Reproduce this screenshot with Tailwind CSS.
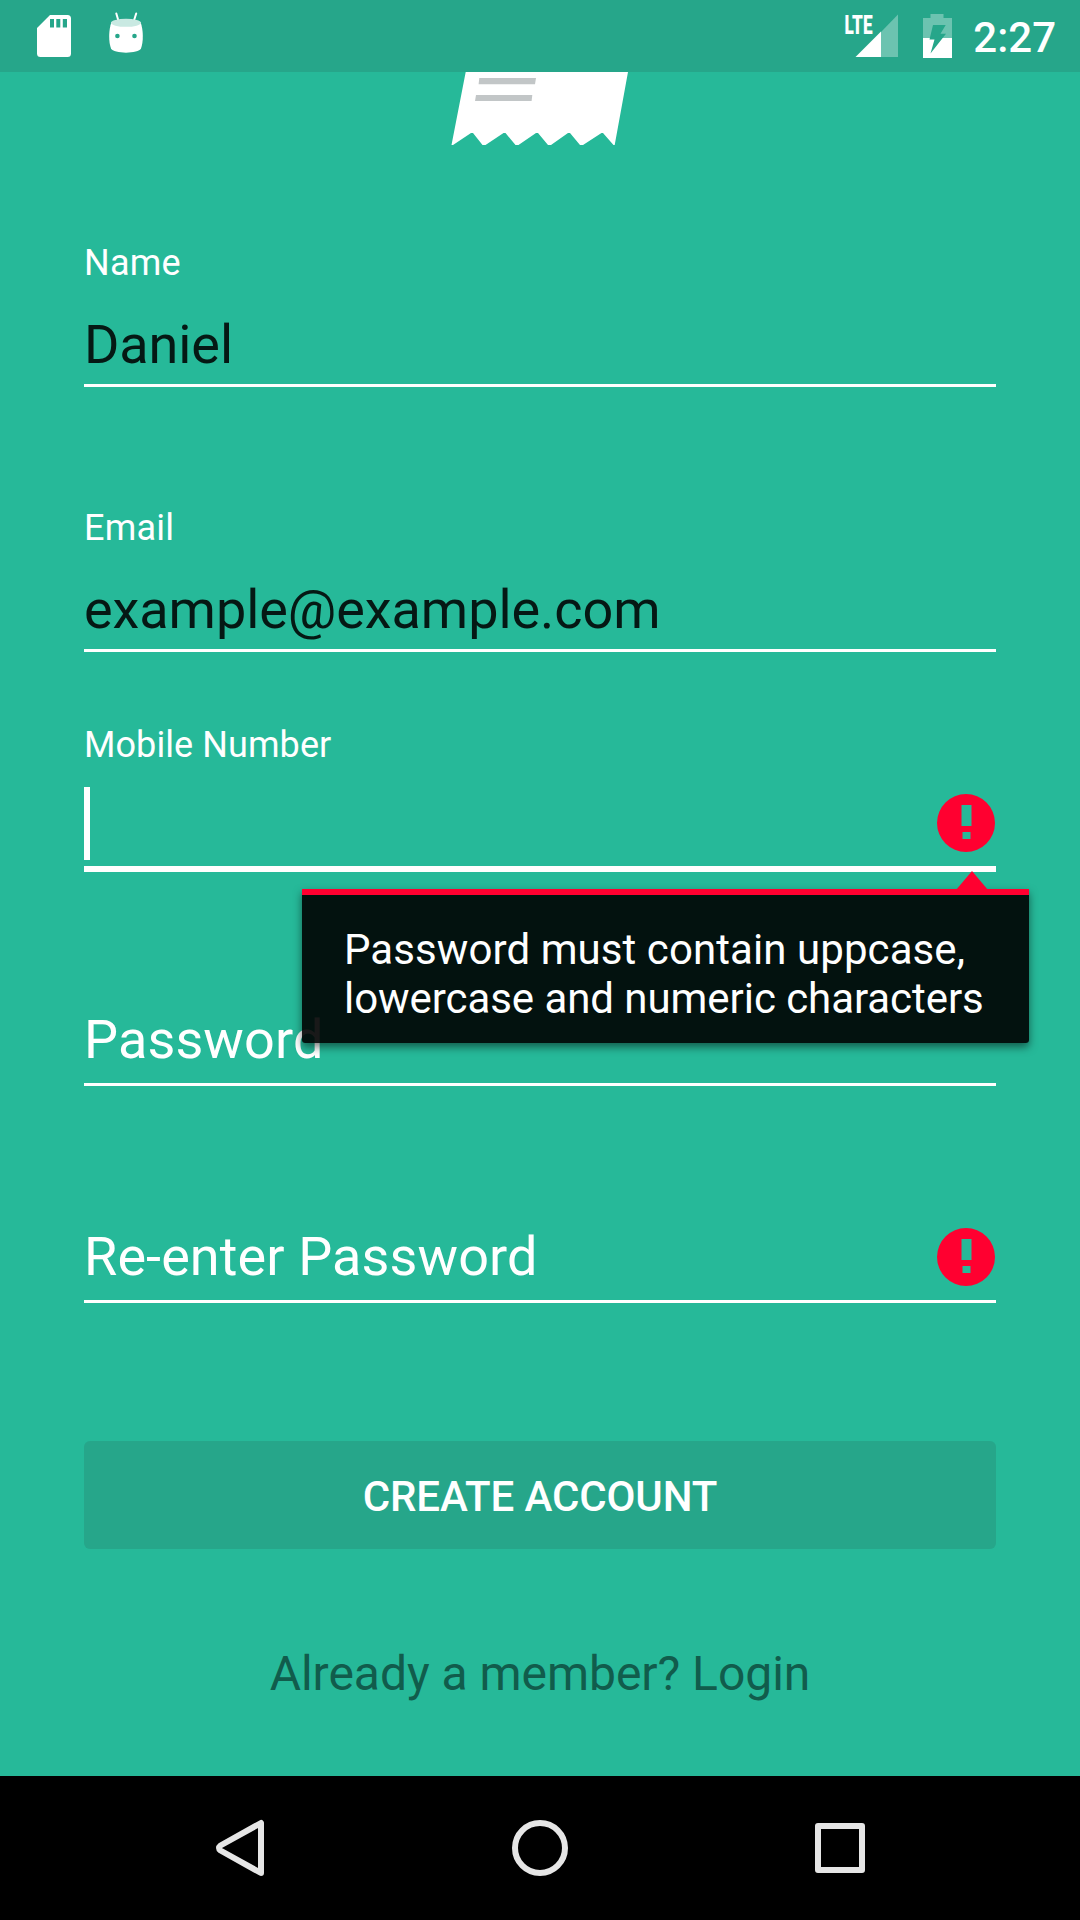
<!DOCTYPE html>
<html lang="en">
<head>
<meta charset="utf-8">
<meta name="viewport" content="width=device-width, initial-scale=1">
<title>Create Account</title>
<script src="https://cdn.jsdelivr.net/npm/@tailwindcss/browser@4"></script>
</head>
<body class="bg-[#26b999]">
<div class="flex h-[1920px] w-[1080px] flex-col overflow-hidden bg-[#26b999] font-[Roboto,sans-serif] text-white">

  <!-- Status bar -->
  <header class="flex h-[72px] shrink-0 items-start justify-between bg-[#26a68a] pr-6 pl-9">
    <div class="flex">
      <svg class="h-[72px] w-[72px]" viewBox="36 0 72 72" aria-hidden="true">
        <path fill="#fff" fill-rule="evenodd" d="M50 15H67.500Q71 15 71 18.500V53.500Q71 57 67.500 57H40.500Q37 57 37 53.500V28ZM50 19V27.500H54V19ZM56.300 19V27.500H60.300V19ZM62.800 19V27.500H67V19Z"/>
      </svg>
      <svg class="h-[72px] w-[36px]" viewBox="108 0 36 72" aria-hidden="true">
        <path d="M116.300 13.500L118.500 21M136.200 13.500L133.800 21" stroke="#fff" stroke-width="2" stroke-linecap="round"/>
        <path fill="#fff" d="M111.500 22C108.500 30 108.500 42 111 48.500C113.500 54 138.500 54 141 48.500C143.500 42 143.500 30 140.500 22Z"/>
        <ellipse cx="126" cy="22.800" rx="15" ry="4" fill="#c9e9e2"/>
        <circle cx="117.400" cy="36" r="2.300" fill="#26a68a"/>
        <circle cx="134.500" cy="36" r="2.300" fill="#26a68a"/>
      </svg>
    </div>
    <div class="flex">
      <svg class="h-[72px] w-[58px]" viewBox="844 0 58 72" aria-hidden="true">
        <path fill="#6cc3b0" d="M881 32L898 14.500V57H881Z"/>
        <path fill="#fff" d="M855.500 57L881 31.500V57Z"/>
        <text x="844.500" y="33.500" font-family="Roboto, sans-serif" font-weight="900" font-size="26" textLength="28" lengthAdjust="spacingAndGlyphs" fill="#fff">LTE</text>
      </svg>
      <svg class="h-[72px] w-[70px]" viewBox="902 0 70 72" aria-hidden="true">
        <path fill="#6cc3b0" d="M930.500 14H943.500V18H952V38H923V18H930.500Z"/>
        <path fill="#fff" d="M923 38H952V58H923Z"/>
        <path fill="#26a68a" d="M933 25H945.700L940.500 33.800H946L930.500 53.500L934.500 39.500H929.500Z"/>
      </svg>
      <span class="mt-[13px] ml-px text-[42px] leading-[49px] font-medium">2:27</span>
    </div>
  </header>

  <!-- Sign-up form -->
  <main class="flex h-[1704px] shrink-0 flex-col px-[84px]">
    <svg class="mr-3 h-[74px] w-[164px] self-center" viewBox="452 72 164 74" overflow="visible" aria-hidden="true">
      <path fill="#fff" d="M465.700 72H628L614.700 145H613.500L603 133H601.500L583 145H580L570 133H568L551 145H548L538 133H536L518.500 145H515.500L505.500 133H503.500L485.500 145H482.500L473 133H471L453 145H451.500Z"/>
      <path fill="#c2c6c7" d="M479.300 78H536L535 84.300H478.600ZM476 95H532.300L531.600 101H475Z"/>
    </svg>

    <label class="mt-24 flex flex-col border-b-[3px] border-white pb-2">
      <span class="text-4xl leading-[42px] tracking-[0.2px]">Name</span>
      <span class="mt-[29px] text-[54px] leading-[63px] tracking-[-0.1px] text-black/87">Daniel</span>
    </label>

    <label class="mt-[120px] flex flex-col border-b-[3px] border-white pb-2">
      <span class="text-4xl leading-[42px] tracking-[0.2px]">Email</span>
      <span class="mt-[29px] text-[54px] leading-[63px] tracking-[-0.06px] text-black/87">example@example.com</span>
    </label>

    <div class="relative mt-[72px] flex flex-col border-b-[6px] border-white">
      <span class="text-4xl leading-[42px] tracking-[0.08px]">Mobile Number</span>
      <div class="mt-[21px] flex h-[79px] items-start justify-between">
        <span class="h-[73px] w-1.5 bg-white"></span>
        <svg class="mt-[7px] mr-[1.5px] h-[58px] w-[58px]" viewBox="0 0 58 58" overflow="visible" aria-hidden="true">
          <path fill="#ff0030" fill-rule="evenodd" d="M29 0A29 29 0 0 1 29 58A29 29 0 0 1 29 0ZM24.500 11V32H34.500V11ZM25.500 38V45H33.500V38Z"/>
        </svg>
      </div>

      <!-- Validation message -->
      <div class="absolute top-[165px] left-[218px] z-10 h-[154px] w-[727px] rounded-b-[3px] border-t-[6px] border-[#ff0030] bg-black/90 pt-[30px] pl-[42px] shadow-[0_4px_8px_rgba(0,0,0,0.5)]">
        <svg class="absolute -top-[24px] right-[41px] h-[19px] w-8" viewBox="0 0 32 19" aria-hidden="true">
          <path fill="#ff0030" d="M16 0L32 19H0Z"/>
        </svg>
        <p class="flex flex-col text-[42px] leading-[49px] whitespace-nowrap">
          <span class="tracking-[0.08px]">Password must contain uppcase,</span>
          <span class="tracking-[-0.06px]">lowercase and numeric characters</span>
        </p>
      </div>
    </div>

    <div class="mt-[136px] flex border-b-[3px] border-white pb-3">
      <span class="text-[54px] leading-[63px] tracking-[0.12px]">Password</span>
    </div>

    <div class="mt-[139px] flex items-start justify-between border-b-[3px] border-white pb-3">
      <span class="text-[54px] leading-[63px] tracking-[0.1px]">Re-enter Password</span>
      <svg class="mt-[3px] mr-[1.5px] h-[58px] w-[58px]" viewBox="0 0 58 58" overflow="visible" aria-hidden="true">
        <path fill="#ff0030" fill-rule="evenodd" d="M29 0A29 29 0 0 1 29 58A29 29 0 0 1 29 0ZM24.500 11V32H34.500V11ZM25.500 38V45H33.500V38Z"/>
      </svg>
    </div>

    <button class="mt-[138px] flex h-[108px] items-start justify-center rounded-md bg-[#26a68a] pt-[31px] text-[42px] leading-[49px] font-medium tracking-[-0.12px]">CREATE ACCOUNT</button>

    <a class="mt-[97px] text-center text-5xl leading-[56px] tracking-[-0.03px] text-[#115c4c]">Already a member? Login</a>
  </main>

  <!-- Navigation bar -->
  <nav class="flex h-36 shrink-0 items-center justify-between bg-black pr-[213px] pl-[214px]">
    <svg class="h-[60px] w-[54px]" viewBox="0 0 54 60" fill="none" stroke="#e6e6e6" stroke-width="6" stroke-linejoin="round" aria-hidden="true">
      <path d="M47 5V55L6.500 32.500Q3.500 30 6.500 27.500Z"/>
    </svg>
    <svg class="mr-px h-[60px] w-[60px]" viewBox="0 0 60 60" fill="none" stroke="#e6e6e6" stroke-width="6" aria-hidden="true">
      <circle cx="30" cy="30" r="25"/>
    </svg>
    <svg class="h-[54px] w-[54px]" viewBox="0 0 54 54" fill="none" stroke="#e6e6e6" stroke-width="6" stroke-linejoin="round" aria-hidden="true">
      <rect x="5" y="5" width="44" height="44"/>
    </svg>
  </nav>
</div>
</body>
</html>
